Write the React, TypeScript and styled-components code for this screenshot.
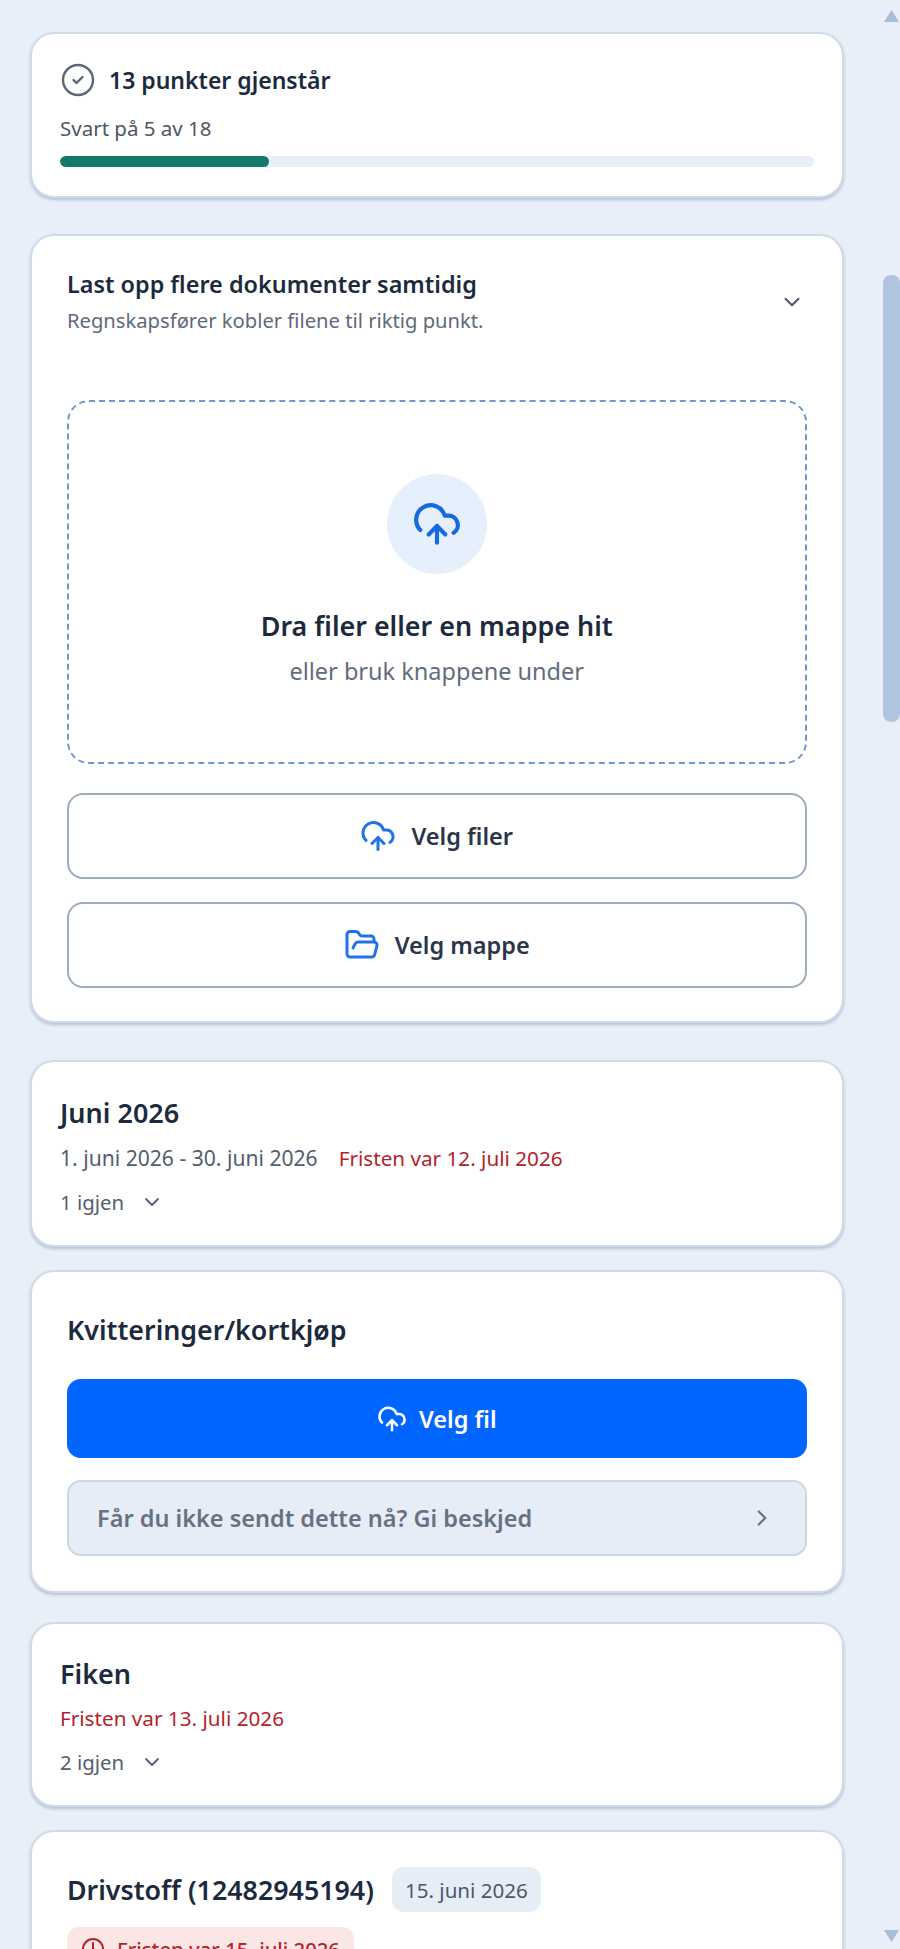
import React from 'react';
import styled, { createGlobalStyle } from 'styled-components';
import { ChevronDown, ChevronRight, CircleCheck, Clock, CloudUpload, FolderOpen } from 'lucide-react';

const GlobalStyle = createGlobalStyle`
  html, body {
    margin: 0;
    padding: 0;
    background: #e8eff9;
    font-family: "Noto Sans", "Open Sans", Arial, sans-serif;
    color: #1c2a3d;
    -webkit-font-smoothing: antialiased;
  }
`;

const Page = styled.div`
  position: relative;
  width: 900px;
  height: 1949px;
  overflow: hidden;
  box-sizing: border-box;
  padding: 32px 56px 0 30px;
`;

const Card = styled.section<{ $top?: number; $pad: string; $height: number }>`
  box-sizing: border-box;
  height: ${(p) => p.$height}px;
  margin-top: ${(p) => p.$top ?? 0}px;
  padding: ${(p) => p.$pad};
  background: #fff;
  border: 2px solid #d0dbea;
  border-radius: 24px;
  box-shadow: 0 2px 3px rgba(90, 110, 145, 0.35);
`;

const StatusRow = styled.div`
  display: flex;
  align-items: center;
  gap: 13px;
  height: 36px;
  color: #5b6575;
`;

const StatusTitle = styled.h2`
  margin: 0;
  font-size: 23px;
  font-weight: 600;
  color: #1c2a3d;
`;

const Answered = styled.div`
  margin-top: 17px;
  font-size: 20.5px;
  line-height: 26px;
  color: #4c5767;
`;

const Track = styled.div`
  height: 11px;
  margin-top: 15px;
  border-radius: 6px;
  background: #e8eff8;
  overflow: hidden;
`;

const Fill = styled.div`
  height: 100%;
  border-radius: 6px;
  background: #137a6a;
`;

const UploadHead = styled.div`
  display: flex;
  justify-content: space-between;
  align-items: center;
  height: 76px;
  padding-right: 2px;
  color: #4c5767;
  svg {
    margin-top: 5px;
  }
`;

const UploadTitle = styled.h2`
  margin: 0;
  font-size: 23.4px;
  line-height: 36px;
  font-weight: 600;
  color: #1c2a3d;
`;

const UploadHint = styled.p`
  margin: 5px 0 0;
  font-size: 20.2px;
  line-height: 26px;
  color: #5f6a7a;
`;

const DropZone = styled.div`
  box-sizing: border-box;
  height: 364px;
  margin-top: 62px;
  padding-top: 72px;
  border: 2px dashed #7097cf;
  border-radius: 22px;
  display: flex;
  flex-direction: column;
  align-items: center;
`;

const IconCircle = styled.div`
  width: 100px;
  height: 100px;
  border-radius: 50%;
  background: #e6f0fd;
  color: #1668e3;
  display: flex;
  align-items: center;
  justify-content: center;
`;

const DropTitle = styled.div`
  margin-top: 32px;
  font-size: 26.9px;
  line-height: 40px;
  font-weight: 600;
  color: #1c2a3d;
`;

const DropHint = styled.div`
  margin-top: 9px;
  font-size: 23.5px;
  line-height: 32px;
  color: #626d7c;
`;

const OutlineButton = styled.button<{ $top: number }>`
  box-sizing: border-box;
  width: 100%;
  height: 86px;
  margin-top: ${(p) => p.$top}px;
  display: flex;
  align-items: center;
  justify-content: center;
  gap: 15px;
  background: #fff;
  border: 2px solid #9dabbe;
  border-radius: 16px;
  color: #2a3648;
  font-family: inherit;
  font-size: 23.5px;
  font-weight: 600;
  svg {
    color: #1f72e8;
  }
`;

const GroupTitle = styled.h3`
  margin: 0;
  font-size: 27px;
  line-height: 36px;
  font-weight: 600;
  color: #1c2a3d;
`;

const MetaRow = styled.div<{ $top: number }>`
  display: flex;
  gap: 21px;
  margin-top: ${(p) => p.$top}px;
  font-size: 20.7px;
  line-height: 28px;
  color: #535e6e;
`;

const DateRange = styled.span`
  font-size: 21.1px;
`;

const Late = styled.span`
  color: #b3232c;
`;

const Remaining = styled.div`
  display: flex;
  align-items: center;
  gap: 16px;
  margin-top: 16px;
  font-size: 20.4px;
  line-height: 28px;
  color: #535e6e;
`;

const ItemTitle = styled.h3`
  margin: 0;
  font-size: 26.8px;
  line-height: 38px;
  font-weight: 600;
  color: #1c2a3d;
`;

const PrimaryButton = styled.button`
  box-sizing: border-box;
  width: 100%;
  height: 79px;
  margin-top: 30px;
  display: flex;
  align-items: center;
  justify-content: center;
  gap: 12px;
  background: #0066ff;
  border: none;
  border-radius: 14px;
  color: #fff;
  font-family: inherit;
  font-size: 23.5px;
  font-weight: 600;
`;

const NoticeButton = styled.button`
  box-sizing: border-box;
  width: 100%;
  height: 76px;
  margin-top: 22px;
  padding: 0 30px 0 28px;
  display: flex;
  align-items: center;
  justify-content: space-between;
  background: #e6edf7;
  border: 2px solid #cbd7e7;
  border-radius: 14px;
  color: #667283;
  font-family: inherit;
  font-size: 23.5px;
  font-weight: 600;
`;

const TitleRow = styled.div`
  display: flex;
  align-items: center;
  gap: 18px;
`;

const DateBadge = styled.span`
  padding: 0 13px;
  height: 45px;
  display: flex;
  align-items: center;
  border-radius: 12px;
  background: #e6edf7;
  font-size: 20.6px;
  color: #4c5767;
`;

const DeadlinePill = styled.div`
  display: inline-flex;
  align-items: center;
  gap: 12px;
  height: 44px;
  margin-top: 15px;
  padding: 0 14px;
  border-radius: 12px;
  background: #fbe6e6;
  color: #b3232c;
  font-size: 20.3px;
  font-weight: 500;
`;

const ScrollRail = styled.div`
  position: absolute;
  top: 0;
  right: 0;
  bottom: 0;
  width: 22px;
`;

const ScrollThumb = styled.div`
  position: absolute;
  top: 275px;
  left: 5px;
  width: 17px;
  height: 447px;
  border-radius: 8px;
  background: #afc4e0;
`;

const ScrollArrow = styled.svg<{ $up?: boolean }>`
  position: absolute;
  left: 5px;
  ${(p) => (p.$up ? 'top: 10px;' : 'bottom: 7px;')}
  width: 17px;
  height: 12px;
  fill: #a9bcd8;
`;

export default function App() {
  return (
    <>
      <GlobalStyle />
      <Page>
        <Card $pad="28px 28px" $height={166}>
          <StatusRow>
            <CircleCheck size={36} strokeWidth={1.6} />
            <StatusTitle>13 punkter gjenstår</StatusTitle>
          </StatusRow>
          <Answered>Svart på 5 av 18</Answered>
          <Track>
            <Fill style={{ width: `${(5 / 18) * 100}%` }} />
          </Track>
        </Card>

        <Card $top={36} $pad="25.5px 35.5px 25.5px 35px" $height={789}>
          <UploadHead>
            <div>
              <UploadTitle>Last opp flere dokumenter samtidig</UploadTitle>
              <UploadHint>Regnskapsfører kobler filene til riktig punkt.</UploadHint>
            </div>
            <ChevronDown size={26} strokeWidth={1.8} />
          </UploadHead>
          <DropZone>
            <IconCircle>
              <CloudUpload size={50} strokeWidth={2} />
            </IconCircle>
            <DropTitle>Dra filer eller en mappe hit</DropTitle>
            <DropHint>eller bruk knappene under</DropHint>
          </DropZone>
          <OutlineButton $top={29}>
            <CloudUpload size={36} strokeWidth={2} />
            Velg filer
          </OutlineButton>
          <OutlineButton $top={23}>
            <FolderOpen size={36} strokeWidth={2} />
            Velg mappe
          </OutlineButton>
        </Card>

        <Card $top={37} $pad="33px 28px" $height={187}>
          <GroupTitle>Juni 2026</GroupTitle>
          <MetaRow $top={13}>
            <DateRange>1. juni 2026 - 30. juni 2026</DateRange>
            <Late>Fristen var 12. juli 2026</Late>
          </MetaRow>
          <Remaining>
            1 igjen
            <ChevronDown size={24} strokeWidth={1.8} />
          </Remaining>
        </Card>

        <Card $top={23} $pad="39px 35.5px 39px 35px" $height={323}>
          <ItemTitle>Kvitteringer/kortkjøp</ItemTitle>
          <PrimaryButton>
            <CloudUpload size={30} strokeWidth={2} />
            Velg fil
          </PrimaryButton>
          <NoticeButton>
            Får du ikke sendt dette nå? Gi beskjed
            <ChevronRight size={26} strokeWidth={2} />
          </NoticeButton>
        </Card>

        <Card $top={29} $pad="32px 28px" $height={185}>
          <GroupTitle>Fiken</GroupTitle>
          <MetaRow $top={12}>
            <Late>Fristen var 13. juli 2026</Late>
          </MetaRow>
          <Remaining>
            2 igjen
            <ChevronDown size={24} strokeWidth={1.8} />
          </Remaining>
        </Card>

        <Card $top={23} $pad="35px 35.5px 35px 35px" $height={300}>
          <TitleRow>
            <ItemTitle>Drivstoff (12482945194)</ItemTitle>
            <DateBadge>15. juni 2026</DateBadge>
          </TitleRow>
          <DeadlinePill>
            <Clock size={24} strokeWidth={2} />
            Fristen var 15. juli 2026
          </DeadlinePill>
        </Card>

        <ScrollRail>
          <ScrollArrow $up viewBox="0 0 17 12">
            <path d="M8.5 0 L16 12 H1 Z" />
          </ScrollArrow>
          <ScrollThumb />
          <ScrollArrow viewBox="0 0 17 12">
            <path d="M1 0 H16 L8.5 12 Z" />
          </ScrollArrow>
        </ScrollRail>
      </Page>
    </>
  );
}
